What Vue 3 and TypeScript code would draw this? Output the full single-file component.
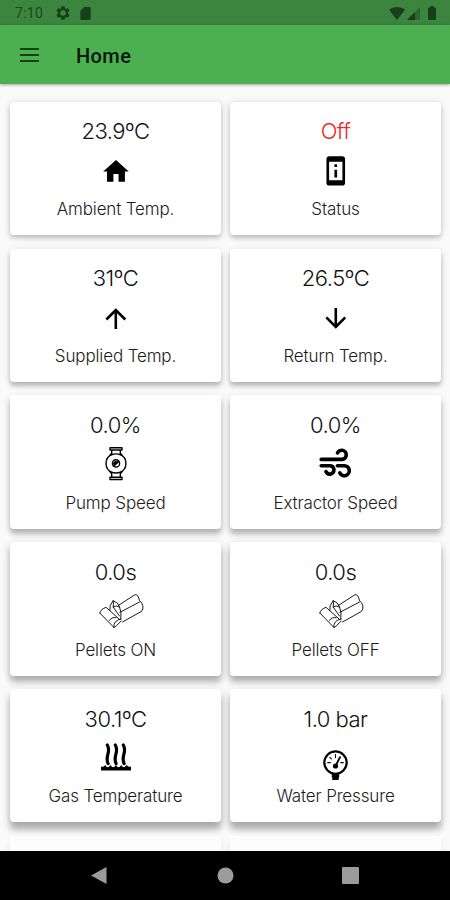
<script setup lang="ts">
interface Reading {
  value: string
  label: string
  icon: string
  alert?: boolean
}

const rows: Reading[][] = [
  [
    { value: '23.9ºC', label: 'Ambient Temp.', icon: 'home' },
    { value: 'Off', label: 'Status', icon: 'device', alert: true },
  ],
  [
    { value: '31ºC', label: 'Supplied Temp.', icon: 'up' },
    { value: '26.5ºC', label: 'Return Temp.', icon: 'down' },
  ],
  [
    { value: '0.0%', label: 'Pump Speed', icon: 'pump' },
    { value: '0.0%', label: 'Extractor Speed', icon: 'wind' },
  ],
  [
    { value: '0.0s', label: 'Pellets ON', icon: 'pellets' },
    { value: '0.0s', label: 'Pellets OFF', icon: 'pellets' },
  ],
  [
    { value: '30.1ºC', label: 'Gas Temperature', icon: 'steam' },
    { value: '1.0 bar', label: 'Water Pressure', icon: 'gauge' },
  ],
  [
    { value: '', label: '', icon: '' },
    { value: '', label: '', icon: '' },
  ],
]
</script>

<template>
  <div class="screen">
    <div class="status">
      <span class="time">7:10</span>
      <svg class="gear" viewBox="2 2 20 20"><path fill-rule="evenodd" d="M19.14 12.94c.04-.3.06-.61.06-.94s-.02-.64-.07-.94l2.03-1.58a.49.49 0 0 0 .12-.61l-1.92-3.32a.49.49 0 0 0-.59-.22l-2.39.96a7 7 0 0 0-1.62-.94l-.36-2.54A.48.48 0 0 0 13.92 2.4h-3.84c-.24 0-.43.17-.47.41l-.36 2.54c-.59.24-1.13.57-1.62.94l-2.39-.96a.48.48 0 0 0-.59.22L2.74 8.87a.48.48 0 0 0 .12.61l2.03 1.58a6 6 0 0 0 0 1.88l-2.03 1.58a.49.49 0 0 0-.12.61l1.92 3.32c.12.22.37.29.59.22l2.39-.96c.5.38 1.03.7 1.62.94l.36 2.54c.05.24.24.41.48.41h3.84c.24 0 .44-.17.47-.41l.36-2.54a7 7 0 0 0 1.62-.94l2.39.96c.22.08.47 0 .59-.22l1.92-3.32a.48.48 0 0 0-.12-.61zM12 16a4 4 0 1 1 0-8 4 4 0 0 1 0 8z" /></svg>
      <svg class="sd" viewBox="4 2 16 20"><path d="M18 2h-8L4 8v12a2 2 0 0 0 2 2h12a2 2 0 0 0 2-2V4a2 2 0 0 0-2-2z" /></svg>
      <span class="spacer"></span>
      <svg class="wifi" viewBox="0 0 16 13"><path d="M8 13 0 2.700C4.600-.9 11.400-.9 16 2.700z" /></svg>
      <svg class="signal" viewBox="0 0 13 13"><path opacity=".4" d="M13 0v13H0z" /><path d="M8 5v8H0z" /></svg>
      <svg class="battery" viewBox="0 0 8 14"><path d="M2.500 0h3v1.500H7q1 0 1 1V13q0 1-1 1H1q-1 0-1-1V2.500q0-1 1-1h1.500z" /></svg>
    </div>

    <header class="bar">
      <svg class="menu" viewBox="0 0 19 14"><path d="M0 1h19M0 7h19M0 13h19" /></svg>
      <h1>Home</h1>
    </header>

    <main class="content">
      <div v-for="(row, i) in rows" :key="i" class="row" :class="'depth-' + i">
        <section v-for="(item, j) in row" :key="j" class="card">
          <div class="value" :class="{ alert: item.alert }">{{ item.value }}</div>
          <svg class="icon" viewBox="-22 -22 44 44">
            <path v-if="item.icon === 'home'" transform="translate(-15.4 -14.8) scale(1.28)" d="M10 20v-6h4v6h5v-8h3L12 3 2 12h3v8z" />
            <path v-else-if="item.icon === 'device'" transform="translate(-16.2 -16) scale(1.33)" fill-rule="evenodd" d="M13 7h-2v2h2V7zm0 4h-2v6h2v-6zm4-9.990L7 1c-1.100 0-2 .9-2 2v18c0 1.100.9 2 2 2h10c1.100 0 2-.9 2-2V3c0-1.100-.9-1.990-2-1.990zM17 19H7V5h10v14z" />
            <path v-else-if="item.icon === 'up'" transform="translate(-15.800 -15) scale(1.3)" d="m4 12 1.410 1.410L11 7.830V20h2V7.830l5.580 5.590L20 12l-8-8-8 8z" />
            <path v-else-if="item.icon === 'down'" transform="translate(-15.800 -15.300) scale(1.3)" d="m20 12-1.410-1.410L13 16.170V4h-2v12.170l-5.580-5.590L4 12l8 8 8-8z" />
            <g v-else-if="item.icon === 'pump'" class="line" stroke-width="1.4">
              <path d="M-6-16.200H6v2.200H-6zM-4.300-14v3.200l-1.700 2M4.300-14v3.200l1.700 2M-6 15.500H6V13.300H-6zM-4.300 13V9.700L-6 7.500M4.300 13V9.700L6 7.500" />
              <path d="M-4-9.600A9.800 9.800 0 0 0-4 8.400M4-9.600A9.800 9.800 0 0 1 4 8.400M-5-9Q0-11.300 5-9M-5 7.800Q0 10.100 5 7.800" />
              <circle cy="-.6" r="3.600" />
              <path stroke-width="2" d="m-1.900 1.300 4-3.600M-1.900-.8l1.600-1.500" />
            </g>
            <path v-else-if="item.icon === 'wind'" class="line" stroke-width="3.600" d="M-14.800-4.600H5.700a4.600 4.600 0 1 0-4.200-6.500M-14.800 1.700h8.600a4.200 4.200 0 1 1-3.900 5.900M1.400 1.700h6.900a5 5 0 1 1-4.500 7.200" />
            <g v-else-if="item.icon === 'pellets'" class="line" transform="translate(-55.500 -61.300) scale(.3333)" stroke-width="2.700">
              <path d="m174 167 48-31q5-3 9 1 5 8 6 16 8 5 10 15 2 11-4 17l-57 32M178 188l59-31" />
              <path d="M118 190q2-12 19-17l41 37M118 190l42 43q4 1 8-5l14-14M160 233q-2-21 22-25M147 212q6-11 20-8M148 182q-3-14 10-29 15 5 19 18 7 17 4 37M158 153q2 11 0 19l19 27M158 172q9-7 19 0" />
            </g>
            <g v-else-if="item.icon === 'steam'">
              <path class="line" stroke-width="3.200" stroke-linecap="butt" d="M-8.700-13c4.200 6.500-2.800 11.500.8 18.500M-.7-13c4.200 6.500-2.800 11.500.8 18.500M7.300-13c4.200 6.500-2.800 11.500.8 18.500" />
              <path d="M-15 12.600V8.800q3 .2 4.400-1.900 1.900 4.600 5.200 0 2.300 4.600 5.300 0 2.400 4.600 5.400 0 2.300 4.600 5.200 0Q12 9 15 8.800v3.800z" />
            </g>
            <g v-else-if="item.icon === 'gauge'">
              <circle class="line" cx="-.5" cy="4.600" r="11.200" stroke-width="2.200" />
              <path d="M-4.200 16h7.400v3.600H2.700v2.500h-6.400v-2.500h-.5z" />
              <circle cx="-.5" cy="8" r="2.600" />
              <path class="line" stroke-width="1.900" d="m-.3 7.800 4.300-8.600" />
              <path class="line" stroke-width="1.100" d="M-.5-3.500V-.4M-6.200-.7l1.500 1.500M-8.300 4.600h2.600M4.800 4.600h2.500" />
            </g>
          </svg>
          <div class="label">{{ item.label }}</div>
        </section>
      </div>
    </main>

    <nav class="nav">
      <svg viewBox="0 0 17 17"><path d="M15.500 0v17L0 8.500z" /></svg>
      <svg viewBox="0 0 17 17"><circle cx="8.500" cy="8.500" r="8" /></svg>
      <svg viewBox="0 0 17 17"><rect width="17" height="17" rx="1" /></svg>
    </nav>
  </div>
</template>

<style>
body {
  margin: 0;
}
</style>

<style scoped>
.screen {
  width: 450px;
  height: 900px;
  display: flex;
  flex-direction: column;
  overflow: hidden;
  background: #fafafa;
  font-family: Inter, "Liberation Sans", sans-serif;
}
.status {
  flex: 0 0 25px;
  display: flex;
  align-items: center;
  box-sizing: border-box;
  padding: 1px 14px 0 15px;
  background: #3b853e;
  color: #1c4a20;
  fill: #173f1b;
}
.time {
  width: 41px;
  font: 400 14px/24px Roboto, sans-serif;
  letter-spacing: 0.3px;
}
.gear {
  width: 14px;
  height: 14px;
}
.sd {
  width: 11px;
  height: 13px;
  margin-left: 10px;
}
.spacer {
  flex: 1;
}
.wifi {
  width: 16px;
  height: 13px;
}
.signal {
  width: 13px;
  height: 13px;
  margin-left: 2px;
}
.battery {
  width: 8px;
  height: 14px;
  margin-left: 8px;
}
.bar {
  flex: 0 0 58.5px;
  display: flex;
  align-items: center;
  box-sizing: border-box;
  padding: 0 20px;
  background: #4caf50;
  box-shadow: 0 1px 3px rgba(0, 0, 0, 0.35);
  z-index: 1;
}
.menu {
  width: 19px;
  height: 14px;
  margin-top: 1px;
  fill: none;
  stroke: #174119;
  stroke-width: 1.8;
}
.bar h1 {
  margin: 3px 0 0 37px;
  color: #07180a;
  font: 500 20px/28px Roboto, sans-serif;
  letter-spacing: 0.4px;
}
.content {
  flex: 1;
  min-height: 0;
  display: flex;
  flex-direction: column;
  gap: 13.3px;
  overflow: hidden;
  padding: 18.3px 9px 0 10px;
}
.row {
  flex: 0 0 133.5px;
  display: grid;
  grid-template-columns: 1fr 1fr;
  gap: 9px;
}
.card {
  display: flex;
  flex-direction: column;
  align-items: center;
  box-sizing: border-box;
  padding-top: 14.6px;
  border-radius: 4px;
  background: #fff;
  box-shadow: 0 3px 4px rgba(0, 0, 0, 0.18), 0 1px 8px rgba(0, 0, 0, 0.12);
}
.depth-1 .card {
  box-shadow: 0 4px 4px rgba(0, 0, 0, 0.2), 0 2px 9px rgba(0, 0, 0, 0.13);
}
.depth-2 .card {
  box-shadow: 0 5px 5px rgba(0, 0, 0, 0.2), 0 3px 9px rgba(0, 0, 0, 0.15);
}
.depth-3 .card {
  box-shadow: 0 6px 6px rgba(0, 0, 0, 0.22), 0 3px 10px rgba(0, 0, 0, 0.16);
}
.depth-4 .card {
  box-shadow: 0 8px 6px rgba(0, 0, 0, 0.22), 0 4px 10px rgba(0, 0, 0, 0.17);
}
.depth-5 .card {
  background: #fdfdfd;
  box-shadow: 0 6px 8px rgba(0, 0, 0, 0.08);
}
.value {
  height: 30px;
  font-size: 22px;
  font-weight: 300;
  line-height: 30px;
  letter-spacing: -0.5px;
  color: #111;
  white-space: nowrap;
}
.value.alert {
  color: #f02a1c;
}
.icon {
  width: 44px;
  height: 44px;
  margin-top: 2.4px;
  overflow: visible;
  fill: #000;
}
.line {
  fill: none;
  stroke: #000;
  stroke-linecap: round;
  stroke-linejoin: round;
}
.label {
  height: 24px;
  margin-top: 4.4px;
  font-size: 17px;
  font-weight: 300;
  line-height: 24px;
  letter-spacing: -0.14px;
  color: #1c1c1c;
  white-space: nowrap;
}
.nav {
  flex: 0 0 49px;
  display: flex;
  align-items: center;
  justify-content: space-between;
  box-sizing: border-box;
  padding: 0 91px;
  background: #000;
  fill: #9b9b9b;
  z-index: 1;
}
.nav svg {
  width: 17px;
  height: 17px;
}
</style>
